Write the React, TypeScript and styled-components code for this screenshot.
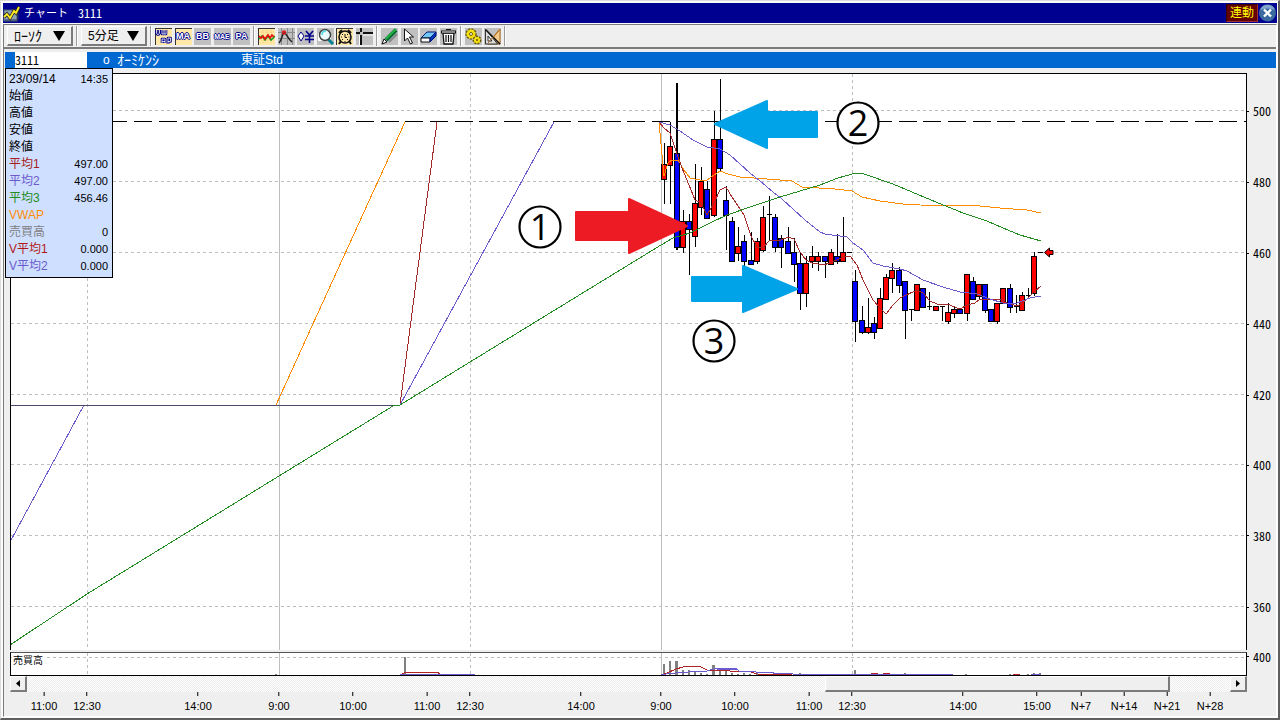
import React from "react";
import styled, { createGlobalStyle, css } from "styled-components";

const sans = `"Liberation Sans", "Noto Sans CJK JP", sans-serif`;
const cjk = `"Noto Sans CJK JP", "Liberation Sans", sans-serif`;

const color = {
  face: "#efefef",
  shadow: "#7b7b7b",
  dark: "#5f5f5f",
  title: "#000090",
  bar: "#0068d0",
  ma1: "#a52a2a",
  ma2: "#6a5acd",
  ma3: "#228b22",
  vwap: "#ff8c00",
  volume: "#808080",
  grid: "#bebebe",
};

/* half-width figures, as on the fixed-pitch quote displays */
const halfWidth = css`
  font: 12px/16px ${cjk};
  font-feature-settings: "hwid";
`;

const GlobalStyle = createGlobalStyle`
  *, *::before, *::after { box-sizing: border-box; }
  body { margin: 0; background: ${color.face}; color: #000; font-family: ${sans}; font-size: 12px; }
  button, input, select { font: inherit; color: inherit; margin: 0; padding: 0; border: 0; border-radius: 0; }
`;

/* ---------- window frame ---------- */

const Window = styled.main`
  display: flex;
  flex-direction: column;
  height: 100vh;
  min-height: 480px;
  padding: 2px 1px 1px 2px;
  background: #fafafa;
  border-style: solid;
  border-width: 1px 2px 2px 1px;
  border-color: #dcdcdc ${color.dark} ${color.dark} #dcdcdc;
`;

const TitleBar = styled.header`
  display: flex;
  align-items: center;
  flex: none;
  height: 20px;
  margin-bottom: 1px;
  background: ${color.title};
  color: #fff;
`;

const Title = styled.h1`
  display: flex;
  align-items: center;
  gap: 10px;
  margin: 0 auto 0 4px;
  font: 11px/20px ${sans};
`;

const TitleCode = styled.span`
  ${halfWidth}
`;

const LinkButton = styled.button`
  width: 32px;
  height: 18px;
  border: 1px solid;
  border-color: #3a0000 #a03030 #a03030 #3a0000;
  background: #640000;
  color: #ffff00;
  font: 12px/16px ${sans};
`;

const CloseButton = styled.button`
  display: flex;
  width: 19px;
  height: 18px;
  background: none;
`;

const Body = styled.div`
  display: flex;
  flex-direction: column;
  flex: 1;
  min-height: 0;
  background: ${color.face};
  border: 1px solid;
  border-color: ${color.shadow} #fff #fff ${color.shadow};
`;

/* ---------- tool bar ---------- */

const ToolBar = styled.div`
  display: flex;
  align-items: center;
  flex: none;
  height: 24px;
  padding-left: 3px;
  border-bottom: 2px solid ${color.shadow};
`;

const Separator = styled.span`
  width: 2px;
  height: 20px;
  margin: 0 3px;
  border-left: 1px solid #9a9a9a;
  border-right: 1px solid #fff;
`;

const SelectBox = styled.div`
  position: relative;
  display: flex;
  height: 20px;
  border: 1px solid;
  border-width: 1px 2px 2px 1px;
  border-color: #fff ${color.shadow} ${color.shadow} #fff;

  svg {
    position: absolute;
    right: 6px;
    top: 4px;
    pointer-events: none;
  }
`;

const Select = styled.select<{ $size: number }>`
  width: 63px;
  padding-left: 6px;
  appearance: none;
  background: ${color.face};
  font: ${(p) => p.$size}px/16px ${sans};
`;

const IconGroup = styled.div<{ $width: number }>`
  display: flex;
  justify-content: space-between;
  width: ${(p) => p.$width}px;
`;

const ToolButton = styled.button<{ $on?: boolean }>`
  display: flex;
  align-items: center;
  justify-content: center;
  width: 17px;
  height: 17px;
  background: #c0c0c0;
  ${(p) =>
    p.$on &&
    css`
      background: #ffe7a6;
      box-shadow: inset 1px 1px 0 #333;
    `}
`;

const Letters = styled.span<{ $size?: number }>`
  color: #fff;
  font: bold ${(p) => p.$size ?? 9}px/11px ${sans};
  text-shadow: 1px 0 #00008b, -1px 0 #00008b, 0 1px #00008b, 0 -1px #00008b;
`;

/* ---------- symbol line and value panel ---------- */

const SymbolArea = styled.div`
  position: relative;
  flex: none;
  margin: 3px 0 5px 1px;
`;

const SymbolBar = styled.div`
  display: flex;
  align-items: center;
  height: 16px;
  padding-left: 10px;
  background: ${color.bar};
  color: #fff;
`;

const CodeInput = styled.input`
  ${halfWidth}
  width: 72px;
  height: 16px;
  margin-right: 16px;
  background: #fff;
  color: #000;
`;

const SymbolText = styled.span<{ $width: number; $size?: number }>`
  width: ${(p) => p.$width}px;
  font: ${(p) => p.$size ?? 12}px/14px ${sans};
`;

const ValuePanel = styled.table`
  position: absolute;
  top: 16px;
  left: 0;
  z-index: 1;
  display: block;
  width: 108px;
  padding: 2px 4px 2px 3px;
  border: 1px solid #000;
  background: #cfdfff;
  border-spacing: 0;

  tbody { display: block; }
  tr { display: flex; justify-content: space-between; height: 17px; }
  th, td { padding: 0; white-space: nowrap; }
  th { font: 12px/17px ${sans}; }
  td { font: 11px/17px ${sans}; }
`;

const ValueName = styled.th<{ $color?: string }>`
  color: ${(p) => p.$color ?? "#000"};
`;

/* ---------- chart ---------- */

const ChartRow = styled.div<{ $grow?: boolean }>`
  display: grid;
  grid-template-columns: minmax(0, 1fr) 29px;
  margin-left: 6px;
  ${(p) => (p.$grow ? "flex: 1; min-height: 0;" : "flex: none;")}
`;

const PricePane = styled.div`
  display: flex;
  flex-direction: column;
  min-height: 0;
  margin-bottom: 2px;
  border: 1px solid #000;
  border-bottom: 0;
  background: #fff;
`;

const VolumePane = styled.div`
  position: relative;
  display: flex;
  flex-direction: column;
  height: 24px;
  border: 1px solid #000;
  border-top-color: #555;
  background: #fff;
`;

const VolumeTitle = styled.span`
  position: absolute;
  left: 1px;
  top: 1px;
  padding: 0 2px 0 1px;
  background: #fff;
  font: 10px/14px ${sans};
`;

const Drawing = styled.svg`
  display: block;
  flex: 1;
  width: 100%;
  height: 0;
  min-height: 0;
`;

const PriceAxis = styled.div`
  position: relative;
`;

const PriceLabel = styled.span`
  position: absolute;
  left: 0;
  display: flex;
  align-items: center;
  gap: 4px;
  transform: translateY(-50%);
  ${halfWidth}

  &::before { content: ""; width: 2px; height: 1px; background: #000; }
`;

const ScrollBar = styled.div`
  display: flex;
  height: 16px;
`;

const raised = css`
  border: 1px solid;
  border-width: 1px 2px 2px 1px;
  border-color: #fff ${color.shadow} ${color.shadow} #fff;
  background: ${color.face};
`;

const ScrollButton = styled.button`
  ${raised}
  display: flex;
  align-items: center;
  justify-content: center;
  flex: none;
  width: 17px;
`;

const ScrollTrack = styled.div<{ $part: number }>`
  flex: ${(p) => p.$part};
  background: repeating-conic-gradient(#fff 0 25%, #ececec 0 50%) 0 0 / 2px 2px;
`;

const ScrollThumb = styled.div<{ $part: number }>`
  ${raised}
  flex: ${(p) => p.$part};
`;

const TimeAxis = styled.div`
  position: relative;
  height: 24px;
`;

const TimeLabel = styled.span`
  position: absolute;
  top: 0;
  display: flex;
  flex-direction: column;
  align-items: center;
  gap: 3px;
  transform: translateX(-50%);
  font: 11px/14px ${sans};

  &::before { content: ""; width: 1px; height: 4px; background: #000; }
`;

/* ---------- data ---------- */

const values: [string, string, string?][] = [
  ["始値", ""],
  ["高値", ""],
  ["安値", ""],
  ["終値", ""],
  ["平均1", "497.00", "#a52020"],
  ["平均2", "497.00", color.ma2],
  ["平均3", "456.46", color.ma3],
  ["VWAP", "", color.vwap],
  ["売買高", "0", color.volume],
  ["V平均1", "0.000", "#b01818"],
  ["V平均2", "0.000", color.ma2],
];

const prices: [string, number][] = [
  ["500", 110], ["480", 181], ["460", 252], ["440", 323],
  ["420", 394], ["400", 464], ["380", 535], ["360", 606],
];

const times: [string, number][] = [
  ["11:00", 44], ["12:30", 87], ["14:00", 198], ["9:00", 279], ["10:00", 353], ["11:00", 427],
  ["12:30", 470], ["14:00", 581], ["9:00", 661], ["10:00", 735], ["11:00", 809], ["12:30", 852],
  ["14:00", 963], ["15:00", 1037], ["N+7", 1081], ["N+14", 1124], ["N+21", 1167], ["N+28", 1210],
];

type Candle = [x: number, high: number, top: number, bottom: number, low: number, kind: "r" | "b" | "d"];

const candles: Candle[] = [
  [664, 143, 164, 179, 203, "r"], [670, 122, 146, 165, 203, "r"], [677, 83, 153, 247, 249, "b"],
  [683, 210, 221, 247, 252, "r"], [689, 214, 221, 229, 274, "b"], [695, 164, 203, 236, 246, "r"],
  [701, 167, 181, 207, 214, "r"], [707, 181, 189, 218, 218, "b"], [714, 111, 139, 215, 216, "r"],
  [720, 79, 139, 168, 171, "b"], [726, 186, 200, 215, 249, "b"], [732, 217, 221, 261, 261, "b"],
  [738, 227, 246, 253, 260, "r"], [744, 235, 241, 261, 265, "b"], [751, 232, 260, 264, 264, "b"],
  [757, 238, 241, 261, 263, "r"], [763, 206, 217, 250, 251, "r"], [769, 196, 214, 214, 240, "d"],
  [775, 214, 217, 247, 251, "b"], [781, 235, 238, 247, 267, "b"], [788, 227, 241, 253, 253, "b"],
  [794, 238, 252, 264, 281, "b"], [800, 252, 263, 293, 309, "b"], [806, 256, 263, 293, 306, "r"],
  [812, 246, 256, 261, 267, "r"], [818, 252, 256, 261, 270, "r"], [825, 256, 256, 261, 277, "b"],
  [831, 249, 252, 264, 264, "r"], [837, 234, 256, 261, 263, "b"], [843, 217, 252, 261, 261, "r"],
  [849, 252, 252, 252, 252, "d"], [855, 270, 281, 321, 341, "b"], [862, 306, 320, 332, 333, "b"],
  [868, 298, 327, 332, 333, "r"], [874, 317, 323, 332, 338, "b"], [880, 288, 298, 328, 328, "r"],
  [886, 274, 277, 299, 299, "r"], [892, 263, 270, 278, 292, "r"], [899, 267, 270, 285, 292, "b"],
  [905, 281, 281, 310, 338, "b"], [911, 309, 309, 309, 320, "d"], [917, 284, 284, 310, 310, "r"],
  [923, 288, 288, 307, 307, "b"], [929, 292, 306, 306, 309, "d"], [936, 306, 306, 310, 310, "r"],
  [942, 306, 306, 306, 320, "d"], [948, 303, 312, 321, 323, "r"], [954, 307, 309, 313, 317, "r"],
  [960, 309, 309, 313, 313, "b"], [967, 274, 274, 313, 320, "r"], [973, 277, 281, 299, 299, "b"],
  [979, 284, 284, 296, 298, "r"], [985, 284, 284, 310, 312, "b"], [991, 309, 309, 321, 321, "b"],
  [997, 303, 303, 321, 323, "r"], [1003, 288, 288, 303, 303, "r"], [1010, 284, 288, 307, 312, "b"],
  [1016, 295, 306, 306, 312, "d"], [1022, 292, 295, 310, 310, "r"], [1028, 288, 295, 295, 298, "d"],
  [1034, 252, 256, 293, 295, "r"], [1040, 252, 252, 252, 252, "d"],
];

const green =
  "10,645 87,594 279,476 393,406 400,405 470,362 661,245 673,238 690,233 710,223 727,215 753,206 780,197 800,191 820,185 838,178 856,173 864,174 893,184 931,200 963,213 987,221 1003,228 1020,235 1041,241";
const orange =
  "659,122 664,176 668,163 672,160 678,160 684,170 690,178 700,180 707,180 714,175 720,171 728,174 740,177 767,179 792,181 802,187 835,189 852,191 862,197 880,201 903,204 920,205 980,206 1000,208 1013,209 1027,210 1041,213";
const brown =
  "659,122 664,128 670,133 676,151 682,168 689,185 695,200 701,203 707,215 714,203 720,190 726,187 732,197 744,215 751,236 757,247 763,248 769,241 781,240 788,237 794,239 800,252 806,260 812,263 824,265 837,260 843,257 850,256 857,265 863,280 873,300 880,308 886,314 893,305 900,298 917,290 923,293 930,301 937,304 947,304 960,309 967,305 975,303 980,299 1000,299 1007,303 1018,306 1027,299 1035,291 1041,286";
const purple =
  "659,122 670,125 680,131 693,140 707,147 720,149 730,155 740,164 750,173 760,181 773,192 782,199 793,209 805,220 820,232 825,234 847,237 853,243 863,250 873,263 883,266 900,269 907,271 923,280 943,287 960,292 977,294 990,299 1003,303 1017,303 1030,298 1041,296";

const volumes: [x: number, top: number, width: number][] = [
  [275, 674, 2], [404, 657, 2], [663, 664, 2], [669, 661, 2], [675, 661, 3], [682, 670, 2], [688, 670, 2],
  [694, 672, 2], [700, 673, 2], [706, 674, 2], [712, 665, 3], [719, 669, 2], [725, 671, 2], [731, 673, 2],
  [737, 674, 2], [743, 673, 2], [749, 674, 2], [756, 673, 2], [799, 673, 2], [854, 670, 2], [904, 673, 2],
  [965, 674, 2], [1009, 674, 2], [1027, 674, 2], [1033, 673, 2], [1039, 673, 2],
];

/* ---------- icons ---------- */

const Icon = ({ children }: { children: React.ReactNode }) => (
  <svg width="17" height="17" viewBox="0 0 17 17" fill="none" aria-hidden="true">
    {children}
  </svg>
);

const AppIcon = () => (
  <svg width="17" height="17" viewBox="0 0 17 17" fill="none" aria-hidden="true">
    <rect x="1" y="5" width="13" height="11" fill="#8fa3b8" stroke="#4a5a70" />
    <path d="M2 15h13V7" stroke="#2c3950" />
    <path d="M1 12l3-3 3 4 4-7 2 2 3-6" stroke="#222" strokeWidth="3.4" />
    <path d="M1 12l3-3 3 4 4-7 2 2 3-6" stroke="#ffee20" strokeWidth="1.8" />
  </svg>
);

const DownArrow = () => (
  <svg width="12" height="10" viewBox="0 0 12 10" aria-hidden="true">
    <path d="M0 0h12L6 10z" />
  </svg>
);

const VwapIcon = () => (
  <Icon>
    <g strokeLinejoin="round">
      <path d="M1.500 2v3l1 1.500h1L4.500 5V2M7 2v4h4V2M9 3v3" stroke="#00008b" strokeWidth="2.600" />
      <path d="M7 15v-4h3v4M7 13.500h3M13 16v-6h2.500v3.500H13" stroke="#00008b" strokeWidth="2.600" />
      <path d="M1.500 2v3l1 1.500h1L4.500 5V2M7 2v4h4V2M9 3v3" stroke="#fff" strokeWidth="0.800" />
      <path d="M7 15v-4h3v4M7 13.500h3M13 16v-6h2.500v3.500H13" stroke="#fff" strokeWidth="0.800" />
    </g>
  </Icon>
);

const LineIcon = () => (
  <Icon>
    <path d="M3 4h13M3 8h13M3 12h13M5 2v14M9 2v14M13 2v14" stroke="#f4cf70" strokeDasharray="1 1" />
    <path d="M1 11l3-3 3 4 3-4 3 4 4-4" stroke="#16a020" strokeWidth="1.6" />
    <path d="M1 8l2 2 2-2 2 3 3-4 2 3 2-3 2 2" stroke="#e81010" strokeWidth="1.6" />
  </Icon>
);

const PeakIcon = () => (
  <Icon>
    <path d="M0 4.500h17M0 10.500h17M3.500 0v17M9.500 0v17M14.500 0v17" stroke="#8a8a8a" />
    <path d="M1 15C4 12 4 6 6 5s3 5 8 9" stroke="#222" strokeWidth="1.500" />
    <circle cx="6" cy="4.500" r="1.500" stroke="#e81010" strokeWidth="1.300" />
  </Icon>
);

const YenIcon = () => (
  <Icon>
    <path d="M4 4l3 4-3 5-3-5z" fill="#fff" stroke="#00008b" />
    <path d="M9 3l3.500 4L16 3M12.500 7v8M8 8h9M8 11.500h9" stroke="#00008b" strokeWidth="1.600" />
  </Icon>
);

const ZoomIcon = () => (
  <Icon>
    <rect x="1" y="5" width="13" height="8" fill="#fff" />
    <path d="M11 11l5 5" stroke="#008090" strokeWidth="3" />
    <circle cx="8" cy="7" r="5.500" fill="#eafcff" stroke="#444" strokeWidth="1.500" />
    <path d="M5 7a4 4 0 014-4" stroke="#49d8e8" strokeWidth="1.600" />
  </Icon>
);

const ClockIcon = () => (
  <Icon>
    <circle cx="9" cy="9" r="6" fill="#ffe7a6" stroke="#111" strokeWidth="1.600" />
    <path d="M3 5l3-3M12 2l3 3M3 16l2-3M15 16l-2-3" stroke="#111" strokeWidth="2" />
    <path d="M9 6v3.500h2M5 9h1M12.500 9h1M9 13v1M6 6l1 1M12 6l-1 1M6 12l1-1M12 12l-1-1" stroke="#111" />
  </Icon>
);

const CrossIcon = () => (
  <Icon>
    <path d="M5 0v4M5 7v10M0 5h4M7 5h10" stroke="#111" strokeWidth="2" />
    <path d="M3.500 17V7M7 7h10" stroke="#fff" />
  </Icon>
);

const PenIcon = () => (
  <Icon>
    <path d="M8 14l8-8" stroke="#888" strokeWidth="2" />
    <path d="M5 12L15 2" stroke="#063" strokeWidth="4" />
    <path d="M5 11L15 1" stroke="#26b040" strokeWidth="2" />
    <path d="M1 16l2-5 3 3z" fill="#fff" stroke="#111" />
  </Icon>
);

const PointerIcon = () => (
  <Icon>
    <path d="M3.500 1v12l3-3 3 6 2-1-3-6h4z" fill="#fff" stroke="#111" />
  </Icon>
);

const EraserIcon = () => (
  <Icon>
    <path d="M1 10l6-6h9l-6 6z" fill="#72c8f4" stroke="#00107c" />
    <path d="M1 10h9v4H1z" fill="#fff" stroke="#111" />
    <path d="M10 10l6-6v4l-6 6z" fill="#0038b8" stroke="#00107c" />
  </Icon>
);

const TrashIcon = () => (
  <Icon>
    <path d="M3 5h11l-1 11H4z" fill="#fff" stroke="#111" strokeWidth="1.300" />
    <path d="M1 4h15" stroke="#111" strokeWidth="3" />
    <path d="M2 4h13" stroke="#fff" />
    <path d="M6 1.500h5M6 7v7M8.500 7v7M11 7v7" stroke="#111" strokeWidth="1.200" />
  </Icon>
);

const GearIcon = () => (
  <Icon>
    <circle cx="6" cy="6" r="4.500" fill="#f4e010" stroke="#6a5a00" strokeWidth="2.400" strokeDasharray="2 1" />
    <circle cx="12" cy="12" r="3.500" fill="#f4e010" stroke="#6a5a00" strokeWidth="2" strokeDasharray="2 1" />
    <circle cx="6" cy="6" r="4.400" fill="#f4e010" />
    <circle cx="12" cy="12" r="3" fill="#f4e010" />
    <circle cx="6" cy="6" r="1.500" fill="#fff" stroke="#6a5a00" />
    <circle cx="12" cy="12" r="1" fill="#6a5a00" />
  </Icon>
);

const RulerIcon = () => (
  <Icon>
    <path d="M4 16L16 1v15z" fill="#f5c98a" stroke="#b07020" />
    <path d="M1.500 1v15h12z" fill="#ddd" stroke="#333" />
    <path d="M4 8v5h4z" fill="#fff" stroke="#333" />
    <path d="M2 2l14 14" stroke="#111" strokeWidth="1.500" />
    <path d="M16 1L4 15" stroke="#b07020" />
  </Icon>
);

const CloseIcon = () => (
  <svg width="19" height="18" viewBox="0 0 19 18" fill="none" aria-hidden="true">
    <circle cx="9.500" cy="9" r="8.500" fill="#3a6aa0" />
    <path d="M2 6a8 8 0 0115 0c-5-2-10-2-15 0z" fill="#7fa4cc" />
    <path d="M6 5.500l7 7M13 5.500l-7 7" stroke="#fff" strokeWidth="2.400" />
  </svg>
);

/* ---------- drawings ---------- */

const VerticalLines = ({ from, to }: { from: number; to: number }) => (
  <g stroke={color.grid} shapeRendering="crispEdges">
    {[87, 470, 852].map((x) => (
      <line key={x} x1={x + 0.5} x2={x + 0.5} y1={from} y2={to} strokeDasharray="3 3" />
    ))}
    {[279, 661].map((x) => (
      <line key={x} x1={x + 0.5} x2={x + 0.5} y1={from} y2={to} />
    ))}
  </g>
);

const CandleMark = ({ candle: [x, high, top, bottom, low, kind] }: { candle: Candle }) => (
  <g>
    <rect x={x === 677 ? 676 : x} y={high} width={x === 677 ? 2 : 1} height={low - high + 1} />
    {kind === "d" ? (
      <rect x={x - 2} y={top} width="5" height="1" />
    ) : (
      <>
        <rect x={x - 3} y={top} width="6" height={bottom - top + 1} />
        <rect x={x - 2} y={top + 1} width="4" height={Math.max(bottom - top - 1, 1)} fill={kind === "r" ? "#ff0000" : "#0000ff"} />
      </>
    )}
  </g>
);

const Note = ({ x, y, text }: { x: number; y: number; text: string }) => (
  <g>
    <circle cx={x} cy={y} r="20.500" fill="#fff" stroke="#000" strokeWidth="2.200" />
    <text x={x} y={y + 13} textAnchor="middle" fontFamily="'Open Sans', 'Noto Sans', sans-serif" fontSize="36">
      {text}
    </text>
  </g>
);

const PriceDrawing = () => (
  <Drawing viewBox="11 74 1235 576" preserveAspectRatio="none" role="img" aria-label="3111 5分足">
    <VerticalLines from={74} to={650} />
    <g stroke={color.grid} strokeDasharray="3 3" shapeRendering="crispEdges">
      {prices.map(([label, y]) => (
        <line key={label} x1="11" x2="1246" y1={y + 0.5} y2={y + 0.5} />
      ))}
    </g>
    <line x1="109" x2="1246" y1="121.500" y2="121.500" stroke="#000" strokeDasharray="18 7 18 7 18 6" shapeRendering="crispEdges" />
    <g shapeRendering="crispEdges">
      {candles.map((c) => (
        <CandleMark key={c[0]} candle={c} />
      ))}
    </g>
    <g fill="none" shapeRendering="crispEdges">
      <polyline points="276,405 405,122" stroke={color.vwap} />
      <polyline points={orange} stroke={color.vwap} />
      <polyline points="400,405 437,122" stroke={color.ma1} />
      <polyline points={brown} stroke={color.ma1} />
      <polyline points="10,542 84,405" stroke={color.ma2} />
      <polyline points="10,405.500 400,405.500" stroke="#4a4a6a" />
      <polyline points="400,405 554,122" stroke={color.ma2} />
      <polyline points={purple} stroke={color.ma2} />
      <polyline points={green} stroke={color.ma3} />
    </g>
    <path d="M1044.500 252.500l5-4.500v2.500h3.500v4h-3.500v2.500z" fill="#ff0000" stroke="#000" />
    <g strokeWidth="2" strokeLinejoin="round">
      <path d="M576 212h53v-13l58 27-58 27v-13h-53z" fill="#ed1c24" stroke="#ed1c24" />
      <path d="M817 112h-50v-11l-52 23 52 24v-11h50z" fill="#00a2e8" stroke="#00a2e8" />
      <path d="M692 277h51v-11l54 23-54 23v-11h-51z" fill="#00a2e8" stroke="#00a2e8" />
    </g>
    <Note x={540} y={227} text="1" />
    <Note x={858} y={123} text="2" />
    <Note x={714} y={341} text="3" />
  </Drawing>
);

const VolumeDrawing = () => (
  <Drawing viewBox="11 653 1235 22" preserveAspectRatio="none" role="img" aria-label="売買高">
    <VerticalLines from={653} to={675} />
    <line x1="11" x2="1246" y1="657.500" y2="657.500" stroke={color.grid} strokeDasharray="3 3" shapeRendering="crispEdges" />
    <g fill={color.volume} shapeRendering="crispEdges">
      {volumes.map(([x, top, width]) => (
        <rect key={x} x={x} y={top} width={width} height={675 - top} />
      ))}
    </g>
    <g fill="none" shapeRendering="crispEdges">
      <polyline points="400,675 405,672.500 438,672.500 441,675" stroke="#b22222" />
      <polyline points="661,675 667,673 676,669 683,667 690,666.500 700,666.500 707,670 713,671 725,670.500 735,671.500 750,671.500 757,674 792,674.500" stroke="#b22222" />
      <path d="M871 673.500h7M883 673.500h7M1013 674.500h7" stroke="#b22222" />
      <polyline points="400,675 405,674.500 475,674.500" stroke={color.ma2} />
      <polyline points="661,674.500 675,673 688,672 705,671.500 714,669 736,668.500 740,671.500 772,672.500 775,673.500 790,673.500 796,674.500 953,674.500" stroke={color.ma2} />
      <path d="M717 669.500h19M1031 674.500h10" stroke={color.ma2} />
    </g>
  </Drawing>
);

/* ---------- page ---------- */

export default function App() {
  return (
    <>
      <GlobalStyle />
      <Window>
        <TitleBar>
          <AppIcon />
          <Title>
            チャート <TitleCode>3111</TitleCode>
          </Title>
          <LinkButton type="button">連動</LinkButton>
          <CloseButton type="button" aria-label="閉じる">
            <CloseIcon />
          </CloseButton>
        </TitleBar>
        <Body>
          <ToolBar>
            <SelectBox>
              <Select $size={14} aria-label="チャート種類">
                <option>ﾛｰｿｸ</option>
              </Select>
              <DownArrow />
            </SelectBox>
            <Separator />
            <SelectBox>
              <Select $size={12} aria-label="足種">
                <option>5分足</option>
              </Select>
              <DownArrow />
            </SelectBox>
            <Separator />
            <IconGroup $width={95}>
              <ToolButton type="button" $on aria-label="VWAP"><VwapIcon /></ToolButton>
              <ToolButton type="button" $on><Letters>MA</Letters></ToolButton>
              <ToolButton type="button"><Letters>BB</Letters></ToolButton>
              <ToolButton type="button"><Letters $size={7}>MAE</Letters></ToolButton>
              <ToolButton type="button"><Letters>PA</Letters></ToolButton>
            </IconGroup>
            <Separator />
            <IconGroup $width={115}>
              <ToolButton type="button" $on aria-label="ライン"><LineIcon /></ToolButton>
              <ToolButton type="button" aria-label="高値表示"><PeakIcon /></ToolButton>
              <ToolButton type="button" aria-label="価格"><YenIcon /></ToolButton>
              <ToolButton type="button" aria-label="拡大"><ZoomIcon /></ToolButton>
              <ToolButton type="button" $on aria-label="時刻"><ClockIcon /></ToolButton>
              <ToolButton type="button" aria-label="十字線"><CrossIcon /></ToolButton>
            </IconGroup>
            <Separator />
            <IconGroup $width={76}>
              <ToolButton type="button" aria-label="描画"><PenIcon /></ToolButton>
              <ToolButton type="button" aria-label="選択"><PointerIcon /></ToolButton>
              <ToolButton type="button" aria-label="消しゴム"><EraserIcon /></ToolButton>
              <ToolButton type="button" aria-label="削除"><TrashIcon /></ToolButton>
            </IconGroup>
            <Separator />
            <IconGroup $width={36}>
              <ToolButton type="button" aria-label="設定"><GearIcon /></ToolButton>
              <ToolButton type="button" aria-label="定規"><RulerIcon /></ToolButton>
            </IconGroup>
            <Separator />
          </ToolBar>

          <SymbolArea>
            <SymbolBar>
              <CodeInput aria-label="銘柄コード" defaultValue="3111" />
              <SymbolText $width={14}>o</SymbolText>
              <SymbolText $width={124} $size={14}>ｵｰﾐｹﾝｼ</SymbolText>
              <SymbolText $width={60}>東証Std</SymbolText>
            </SymbolBar>
            <ValuePanel>
              <tbody>
                <tr>
                  <th scope="row">23/09/14</th>
                  <td>14:35</td>
                </tr>
                {values.map(([name, value, tint]) => (
                  <tr key={name}>
                    <ValueName scope="row" $color={tint}>{name}</ValueName>
                    <td>{value}</td>
                  </tr>
                ))}
              </tbody>
            </ValuePanel>
          </SymbolArea>

          <ChartRow $grow>
            <PricePane>
              <PriceDrawing />
            </PricePane>
            <PriceAxis>
              {prices.map(([label, y]) => (
                <PriceLabel key={label} style={{ top: `${((y - 72) / 579) * 100}%` }}>
                  {label}
                </PriceLabel>
              ))}
            </PriceAxis>
          </ChartRow>
          <ChartRow>
            <VolumePane>
              <VolumeDrawing />
              <VolumeTitle>売買高</VolumeTitle>
            </VolumePane>
            <PriceAxis>
              <PriceLabel style={{ top: "20%" }}>400</PriceLabel>
            </PriceAxis>
          </ChartRow>
          <ChartRow>
            <div>
              <ScrollBar>
                <ScrollButton type="button" aria-label="左へ">
                  <svg width="4" height="7" viewBox="0 0 4 7" aria-hidden="true"><path d="M4 0v7L0 3.500z" /></svg>
                </ScrollButton>
                <ScrollTrack $part={800} />
                <ScrollThumb $part={343} />
                <ScrollTrack $part={60} />
                <ScrollButton type="button" aria-label="右へ">
                  <svg width="4" height="7" viewBox="0 0 4 7" aria-hidden="true"><path d="M0 0v7l4-3.500z" /></svg>
                </ScrollButton>
              </ScrollBar>
              <TimeAxis>
                {times.map(([label, x]) => (
                  <TimeLabel key={x} style={{ left: `${((x - 10) / 1237) * 100}%` }}>
                    {label}
                  </TimeLabel>
                ))}
              </TimeAxis>
            </div>
          </ChartRow>
        </Body>
      </Window>
    </>
  );
}
